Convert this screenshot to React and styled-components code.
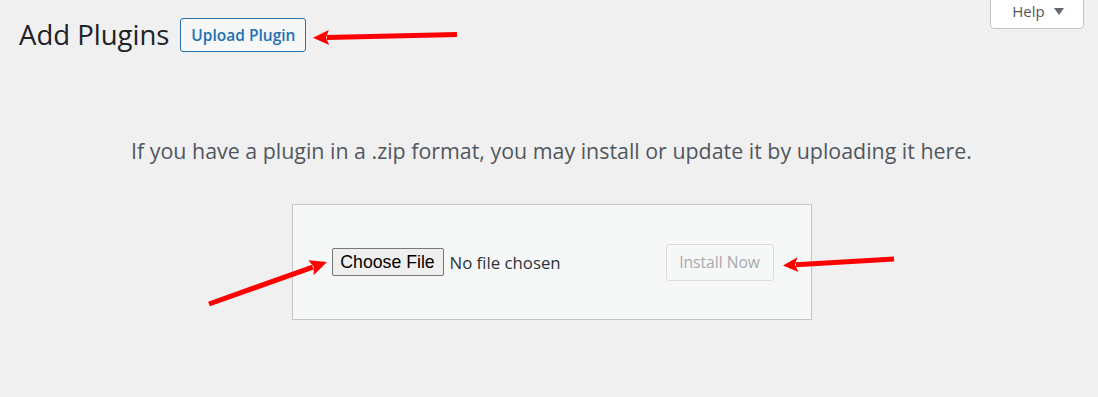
import React from "react";
import styled, { createGlobalStyle } from "styled-components";

const Global = createGlobalStyle`
  html, body { margin: 0; padding: 0; background: #f0f0f1; }
  body { font-family: "Open Sans", "Noto Sans", sans-serif; color: #1d2327; }
  #root { position: relative; width: 1098px; height: 397px; overflow: hidden; }
`;

const Page = styled.div`
  position: relative;
  box-sizing: border-box;
  width: 1098px;
  height: 397px;
  padding: 0 14px 0 19px;
`;

const Header = styled.div`
  display: flex;
  justify-content: space-between;
  align-items: flex-start;
`;

const TitleGroup = styled.div`
  display: flex;
  align-items: center;
  gap: 11px;
  padding-top: 18px;
`;

const Title = styled.h1`
  margin: 0;
  font-size: 27.5px;
  font-weight: 400;
  line-height: 34px;
  color: #1d2327;
`;

const OutlineButton = styled.button`
  box-sizing: border-box;
  height: 34px;
  width: 126px;
  padding: 0;
  border: 1px solid #2271b1;
  border-radius: 3px;
  background: #f6f7f7;
  color: #2271b1;
  font-family: "Open Sans", "Noto Sans", sans-serif;
  font-size: 15.5px;
  font-weight: 600;
  cursor: pointer;
`;

const HelpTab = styled.button`
  box-sizing: border-box;
  width: 94px;
  height: 30px;
  margin-top: -1px;
  border: 1px solid #c3c4c7;
  border-radius: 0 0 4px 4px;
  background: #fff;
  color: #50575e;
  font-family: "Open Sans", "Noto Sans", sans-serif;
  font-size: 15px;
  display: flex;
  align-items: center;
  justify-content: center;
  gap: 9px;
  padding: 0 0 7px 2px;
`;

const Caret = styled.span`
  width: 0;
  height: 0;
  margin-top: 1px;
  border-left: 5.5px solid transparent;
  border-right: 5.5px solid transparent;
  border-top: 7px solid #646970;
`;

const Body = styled.div`
  display: flex;
  flex-direction: column;
  align-items: center;
`;

const Help = styled.p`
  margin: 85px 0 0;
  font-size: 21.4px;
  line-height: 28px;
  color: #50575e;
  text-align: center;
`;

const UploadForm = styled.form`
  box-sizing: border-box;
  margin-top: 39px;
  width: 520px;
  height: 116px;
  background: #f6f7f7;
  border: 1px solid #c3c4c7;
  padding: 0 37px 0 39px;
  display: flex;
  align-items: center;
  justify-content: space-between;
`;

const FileField = styled.label`
  display: flex;
  align-items: center;
  gap: 6px;
`;

const FileButton = styled.span`
  box-sizing: border-box;
  height: 28px;
  width: 112px;
  display: flex;
  align-items: center;
  justify-content: center;
  border: 1px solid #767676;
  border-radius: 2px;
  background: #efefef;
  color: #000;
  font-family: "Liberation Sans", Arial, sans-serif;
  font-size: 17.7px;
`;

const FileStatus = styled.span`
  font-size: 16.8px;
  color: #2c3338;
`;

const HiddenInput = styled.input`
  display: none;
`;

const DisabledButton = styled.button`
  box-sizing: border-box;
  width: 108px;
  height: 37px;
  padding: 0;
  border: 1px solid #dcdcde;
  border-radius: 3px;
  background: #f6f7f7;
  color: #a7aaad;
  font-family: "Open Sans", "Noto Sans", sans-serif;
  font-size: 15.6px;
`;

const Overlay = styled.svg`
  position: absolute;
  left: 0;
  top: 0;
  width: 1098px;
  height: 397px;
  pointer-events: none;
`;

function Arrow({ x1, y1, x2, y2, head = 17, half = 8 }) {
  const dx = x2 - x1;
  const dy = y2 - y1;
  const len = Math.hypot(dx, dy);
  const ux = dx / len;
  const uy = dy / len;
  const bx = x2 - ux * head;
  const by = y2 - uy * head;
  const px = -uy;
  const py = ux;
  const lx = x2 - ux * (head - 2);
  const ly = y2 - uy * (head - 2);
  return (
    <g fill="#ff0000" stroke="#ff0000">
      <line x1={x1} y1={y1} x2={lx} y2={ly} strokeWidth="5" />
      <polygon
        stroke="none"
        points={`${x2},${y2} ${bx + px * half},${by + py * half} ${bx + ux * 3},${by + uy * 3} ${bx - px * half},${by - py * half}`}
      />
    </g>
  );
}

export default function App() {
  return (
    <>
      <Global />
      <Page>
        <Header>
          <TitleGroup>
            <Title>Add Plugins</Title>
            <OutlineButton type="button">Upload Plugin</OutlineButton>
          </TitleGroup>
          <HelpTab type="button">
            Help <Caret />
          </HelpTab>
        </Header>
        <Body>
          <Help>
            If you have a plugin in a .zip format, you may install or update it by uploading it here.
          </Help>
          <UploadForm onSubmit={(e) => e.preventDefault()}>
            <FileField>
              <HiddenInput type="file" accept=".zip" />
              <FileButton>Choose File</FileButton>
              <FileStatus>No file chosen</FileStatus>
            </FileField>
            <DisabledButton type="submit" disabled>
              Install Now
            </DisabledButton>
          </UploadForm>
        </Body>
        <Overlay viewBox="0 0 1098 397">
          <Arrow x1={457} y1={34.5} x2={313} y2={37.8} head={16} half={7.5} />
          <Arrow x1={209} y1={304} x2={327} y2={262} head={17} half={8} />
          <Arrow x1={894} y1={259} x2={783} y2={265.5} head={15} half={7.5} />
        </Overlay>
      </Page>
    </>
  );
}
